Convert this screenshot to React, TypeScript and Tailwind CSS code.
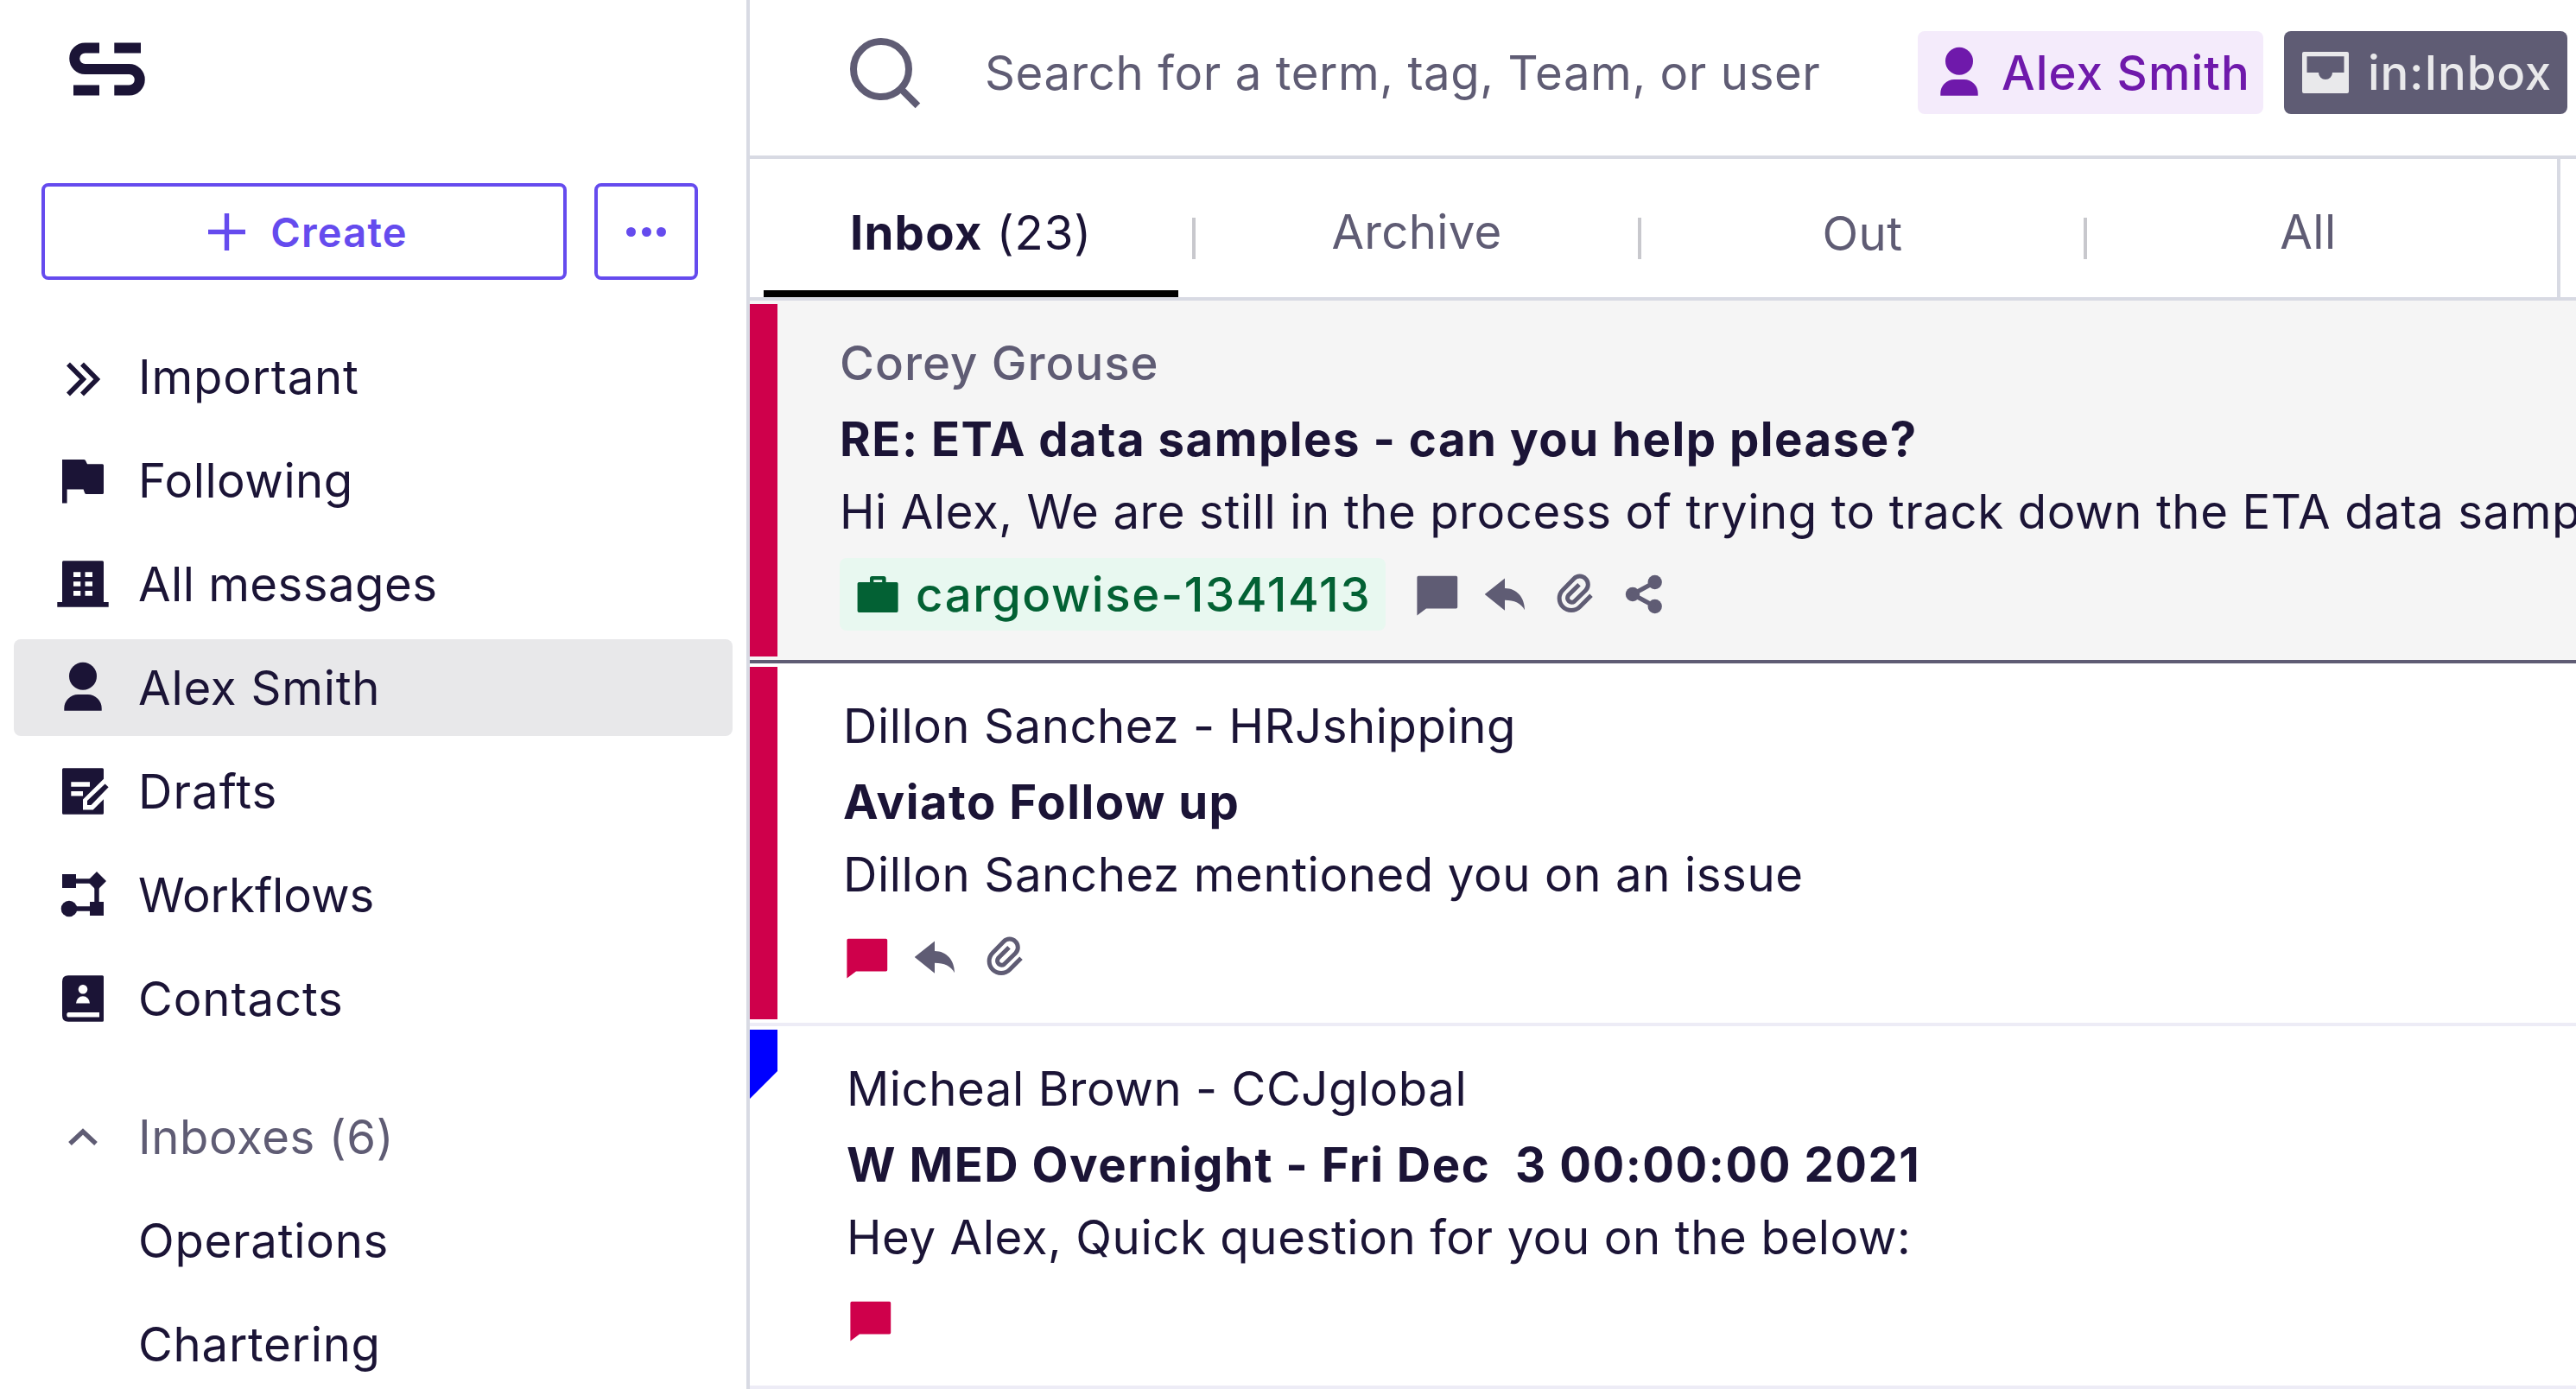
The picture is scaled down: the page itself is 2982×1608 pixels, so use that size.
import type { ReactNode } from "react";
import clsx from "clsx";

type IconProps = { className?: string };

function Icon({ className, size = 64, children }: IconProps & { size?: number; children: ReactNode }) {
  return (
    <svg
      className={clsx("shrink-0", className)}
      width={size}
      height={size}
      viewBox={`0 0 ${size} ${size}`}
      fill="currentColor"
    >
      {children}
    </svg>
  );
}

function Logo() {
  return (
    <svg width="88" height="62" viewBox="0 0 88 62" fill="none" stroke="#1b1436" strokeWidth="12">
      <path d="M35 6.5H18.5a12.25 12.25 0 0 0 0 24.5H69.5a12.25 12.25 0 0 1 0 24.5H52.3" />
      <path d="M52.3 6.5H83M5 55.5H35" />
    </svg>
  );
}

/* Sidebar icons, 64px box */

const ImportantIcon = () => (
  <Icon>
    <path d="M15 17.5 32.3 35 15 52.5M31 17.5 48.3 35 31 52.5" fill="none" stroke="currentColor" strokeWidth="5.6" />
  </Icon>
);

const FlagIcon = () => (
  <Icon>
    <path d="M8 8H33.2q1.5 0 2 1.5L37 13.3H54.5q1.5 0 1.5 1.5V46.5q0 1.5-1.5 1.5H36q-1.5 0-2-1.5L32.6 42.4H13.6V58.6H8Z" />
  </Icon>
);

const BuildingIcon = () => (
  <Icon>
    <path
      fillRule="evenodd"
      d="M9.5 5.2h45q1.5 0 1.5 1.5V53h5.7v5.7H2.3V53H8V6.7q0-1.5 1.5-1.5ZM21 18.3V24h8.3v-5.7ZM34.5 18.3V24H43v-5.7ZM21 29.2v5.6h8.3v-5.6ZM34.5 29.2v5.6H43v-5.6ZM21 40v5.7h8.3V40ZM34.5 40v5.7H43V40Z"
    />
  </Icon>
);

const PersonIcon = () => (
  <Icon>
    <circle cx="32" cy="18.7" r="16" />
    <path d="M10.3 58.7V56a16 16 0 0 1 16-16h11.4a16 16 0 0 1 16 16v2.7Z" />
  </Icon>
);

const DraftIcon = () => (
  <Icon>
    <path
      fillRule="evenodd"
      d="M9.5 5.3h45q1.5 0 1.5 1.5V17.7L32 41.6V53.5H43.7L56 41.2V57.2q0 1.5-1.5 1.5h-45Q8 58.7 8 57.2V6.8q0-1.5 1.5-1.5ZM18.3 21.3v5.5H40v-5.5ZM18.3 32v5.5H32V32Z"
    />
    <path d="M37 48v-5L57.6 23.4l4 3.8L41.5 48Z" />
  </Icon>
);

const WorkflowIcon = () => (
  <Icon>
    <path d="M8 8h16v16H8ZM40 40h16v16H40ZM48 5 59 16 48 27 37 16Z" />
    <circle cx="16" cy="48" r="9.3" />
    <path d="M20 16H48V45M20 48H44" fill="none" stroke="currentColor" strokeWidth="5.4" />
  </Icon>
);

const ContactsIcon = () => (
  <Icon>
    <path
      fillRule="evenodd"
      d="M15 5.3h39.5q1.5 0 1.5 1.5V57.2q0 1.5-1.5 1.5H15q-7 0-7-7V12.3q0-7 7-7ZM15.3 48q-2 0-2 2.8t2 2.8H51V48ZM24 37.6H40a8 8.4 0 0 0-16 0ZM32 16a5.3 5.3 0 1 0 .01 0Z"
    />
  </Icon>
);

const ChevronUpIcon = () => (
  <Icon>
    <path d="M17 40 32 26l15 14" fill="none" stroke="currentColor" strokeWidth="5.4" />
  </Icon>
);

const InboxIcon = () => (
  <Icon>
    <path
      fillRule="evenodd"
      d="M7 8h50q2 0 2 2v44q0 2-2 2H7q-2 0-2-2V10q0-2 2-2ZM10.5 13.2V32H24a8 8 0 0 0 16 0H53.5V13.2Z"
    />
  </Icon>
);

function SearchIcon() {
  return (
    <svg className="shrink-0" width="88" height="88" viewBox="0 0 88 88" fill="none" stroke="#5f5c74" strokeWidth="8">
      <circle cx="40" cy="40" r="32" />
      <path d="m63 63 19.4 19.4" />
    </svg>
  );
}

/* Message row icons, 56px box */

const CommentIcon = ({ className }: IconProps) => (
  <Icon size={56} className={className}>
    <path d="M6 4.8H49.6q1.6 0 1.6 1.6V40.8q0 1.6-1.6 1.6H15L4.4 50.4V6.4q0-1.6 1.6-1.6Z" />
  </Icon>
);

const ReplyIcon = () => (
  <Icon size={56}>
    <path d="M2.7 26 26 7.4V19C40 19 49 30 49 44.3 45 36.5 37 32.8 26 32.8V44.7Z" />
  </Icon>
);

const ClipIcon = () => (
  <Icon size={56}>
    <path
      d="M46 27.3 32.8 40.5a13.8 13.8 0 0 1-19.6-19.6L25.9 7.9a9.6 9.6 0 0 1 13.6 13.6L26.5 34.2a5 5 0 0 1-7-7L32 14.7"
      fill="none"
      stroke="currentColor"
      strokeWidth="5"
    />
  </Icon>
);

const ShareIcon = () => (
  <Icon size={56}>
    <circle cx="14" cy="26" r="8.2" />
    <circle cx="39.7" cy="12" r="8.2" />
    <circle cx="39.7" cy="40" r="8.2" />
    <path d="M39.7 12 14 26l25.7 14" fill="none" stroke="currentColor" strokeWidth="5.4" />
  </Icon>
);

const CaseIcon = () => (
  <Icon size={56}>
    <path
      fillRule="evenodd"
      d="M6.4 14H19V9.6q0-2.6 2.6-2.6H35q2.6 0 2.6 2.6V14H49.8q1.8 0 1.8 1.8V47.2q0 1.8-1.8 1.8H6.4q-1.8 0-1.8-1.8V15.8Q4.6 14 6.4 14ZM23.3 11.3V14H33.2V11.3Z"
    />
  </Icon>
);

const NAV = [
  { label: "Important", icon: <ImportantIcon />, text: "tracking-[0.8px]" },
  { label: "Following", icon: <FlagIcon />, text: "tracking-[0.5px]" },
  { label: "All messages", icon: <BuildingIcon />, text: "tracking-[0.45px]" },
  { label: "Alex Smith", icon: <PersonIcon />, text: "tracking-[0.8px]", active: true },
  { label: "Drafts", icon: <DraftIcon />, text: "tracking-[1.1px]" },
  { label: "Workflows", icon: <WorkflowIcon />, text: "tracking-normal" },
  { label: "Contacts", icon: <ContactsIcon />, text: "tracking-[0.9px]" },
];

const INBOXES = ["Operations", "Chartering"];

function NavItem({
  label,
  icon,
  text,
  active,
  muted,
}: {
  label: string;
  icon?: ReactNode;
  text?: string;
  active?: boolean;
  muted?: boolean;
}) {
  return (
    <div
      className={clsx(
        "flex h-[112px] shrink-0 items-center gap-8 rounded-lg pl-12",
        active && "bg-[#e8e8ea]",
        muted ? "text-[#5f5c74]" : "text-[#1b1436]"
      )}
    >
      {icon ?? <span className="w-16" />}
      <span className={clsx("whitespace-nowrap", text)}>{label}</span>
    </div>
  );
}

function Sidebar() {
  return (
    <aside className="flex w-[868px] shrink-0 flex-col border-r-4 border-[#d8dae3]">
      <div className="shrink-0 pt-[49px] pl-20">
        <Logo />
      </div>
      <div className="mt-[101px] flex h-28 shrink-0 gap-8 px-12 text-[#654bee]">
        <button className="flex w-[608px] items-center justify-center gap-[28px] rounded-lg border-4 border-current pl-2">
          <svg width="45" height="45" viewBox="0 0 45 45" stroke="currentColor" strokeWidth="5.4">
            <path d="M22.5 1v43M1 22.5h43" />
          </svg>
          <span className="text-[47px] font-semibold leading-none tracking-[1.2px]">Create</span>
        </button>
        <button className="flex w-[120px] items-center justify-center gap-[6.5px] rounded-lg border-4 border-current">
          <span className="size-[11px] rounded-full bg-current" />
          <span className="size-[11px] rounded-full bg-current" />
          <span className="size-[11px] rounded-full bg-current" />
        </button>
      </div>
      <nav className="mt-14 flex shrink-0 flex-col gap-2 px-4">
        {NAV.map((item) => (
          <NavItem key={item.label} {...item} />
        ))}
      </nav>
      <nav className="mt-12 flex shrink-0 flex-col gap-2 px-4">
        <NavItem label="Inboxes (6)" icon={<ChevronUpIcon />} text="tracking-[0.6px]" muted />
        {INBOXES.map((name) => (
          <NavItem key={name} label={name} text="tracking-[0.75px]" />
        ))}
      </nav>
    </aside>
  );
}

function SearchBar() {
  return (
    <div className="flex h-[184px] shrink-0 items-start border-b-4 border-[#d8dae3] pl-[112px]">
      <div className="mt-10">
        <SearchIcon />
      </div>
      <span className="ml-[72px] mt-9 w-[1080px] leading-[96px] tracking-[0.58px] text-[#5f5c74]">
        Search for a term, tag, Team, or user
      </span>
      <div className="mt-9 flex h-24 gap-6 font-medium">
        <span className="flex w-[400px] items-center gap-[17px] rounded-lg bg-[#f4ebfb] pl-4 tracking-[1.1px] whitespace-nowrap text-[#6f19ab]">
          <PersonIcon />
          Alex Smith
        </span>
        <span className="flex w-[328px] items-center gap-[17px] rounded-lg bg-[#5f5c74] pl-4 tracking-[0.8px] whitespace-nowrap text-[#e9e9eb]">
          <InboxIcon />
          in:Inbox
        </span>
      </div>
    </div>
  );
}

function TabDivider() {
  return <span className="mx-4 mt-[68px] h-12 w-1 shrink-0 bg-[#c8c8cd]" />;
}

function Tabs() {
  return (
    <div className="flex h-[164px] shrink-0 border-b-4 border-[#d8dae3] text-center leading-[160px] text-[#5f5c74]">
      <div className="flex w-[2096px] shrink-0 border-r-4 border-[#d8dae3] pl-4">
        <div className="flex w-[480px] flex-col border-b-8 border-black text-[#1b1436]">
          <span className="h-[152px] pt-[5px] whitespace-pre">
            <b className="font-bold tracking-[1.2px]">Inbox</b>
            <span className="tracking-[0.9px]"> (23)</span>
          </span>
        </div>
        <TabDivider />
        <span className="w-[480px] pt-1 tracking-[0.3px]">Archive</span>
        <TabDivider />
        <span className="w-[480px] pt-[6px] tracking-[0.5px]">Out</span>
        <TabDivider />
        <span className="w-[480px] pt-1 tracking-[0.5px]">All</span>
      </div>
    </div>
  );
}

type Message = {
  from: string;
  subject: string;
  preview: string;
  tag?: string;
  icons: ReactNode;
  // left padding grows by a step per row
  indent: string;
  flag: "bar" | "ribbon";
  selected?: boolean;
};

const MESSAGES: Message[] = [
  {
    from: "Corey Grouse",
    subject: "RE: ETA data samples - can you help please?",
    preview: "Hi Alex, We are still in the process of trying to track down the ETA data samples",
    tag: "cargowise-1341413",
    icons: (
      <>
        <CommentIcon />
        <ReplyIcon />
        <ClipIcon />
        <ShareIcon />
      </>
    ),
    indent: "pl-[104px]",
    flag: "bar",
    selected: true,
  },
  {
    from: "Dillon Sanchez - HRJshipping",
    subject: "Aviato Follow up",
    preview: "Dillon Sanchez mentioned you on an issue",
    icons: (
      <>
        <CommentIcon className="text-[#cf004b]" />
        <ReplyIcon />
        <ClipIcon />
      </>
    ),
    indent: "pl-[108px]",
    flag: "bar",
  },
  {
    from: "Micheal Brown - CCJglobal",
    subject: "W MED Overnight - Fri Dec  3 00:00:00 2021",
    preview: "Hey Alex, Quick question for you on the below:",
    icons: <CommentIcon className="text-[#cf004b]" />,
    indent: "pl-[112px]",
    flag: "ribbon",
  },
];

function MessageRow({ message }: { message: Message }) {
  const { from, subject, preview, tag, icons, indent, flag, selected } = message;
  return (
    <div
      className={clsx(
        "relative h-[420px] shrink-0 overflow-hidden border-b-4 pt-[30px] whitespace-pre text-[#1b1436]",
        indent,
        selected ? "border-[#5f5c74] bg-[#f5f5f5]" : "border-[#edecf6]"
      )}
    >
      {flag === "bar" ? (
        <span className="absolute top-1 bottom-1 left-0 w-8 bg-[#cf004b]" />
      ) : (
        <svg className="absolute top-1 left-0" width="32" height="80" viewBox="0 0 32 80" fill="#0000ff">
          <path d="M0 0h32v48L0 80Z" />
        </svg>
      )}
      <p
        className={clsx(
          "h-[84px] leading-[84px]",
          selected ? "font-medium tracking-[1px] text-[#5f5c74]" : "tracking-[0.55px]"
        )}
      >
        {from}
      </p>
      <p className="h-[92px] font-bold leading-[92px] tracking-[1.5px]">{subject}</p>
      <p className="h-[76px] leading-[76px] tracking-[0.6px]">{preview}</p>
      <div className="mt-4 flex h-[84px] gap-8">
        {tag && (
          <span className="flex w-[632px] items-center gap-4 rounded-lg bg-[#e8f8f0] pl-4 font-medium tracking-[1.65px] text-[#036134]">
            <CaseIcon />
            {tag}
          </span>
        )}
        <div className="flex gap-6 pt-4 text-[#5f5c74]">{icons}</div>
      </div>
    </div>
  );
}

export default function App() {
  return (
    <div className="flex h-[1608px] w-[2982px] overflow-hidden bg-white font-['Inter',sans-serif] text-[54.5px] leading-none">
      <Sidebar />
      <main className="flex min-w-0 flex-1 flex-col">
        <SearchBar />
        <Tabs />
        {MESSAGES.map((message) => (
          <MessageRow key={message.from} message={message} />
        ))}
      </main>
    </div>
  );
}
